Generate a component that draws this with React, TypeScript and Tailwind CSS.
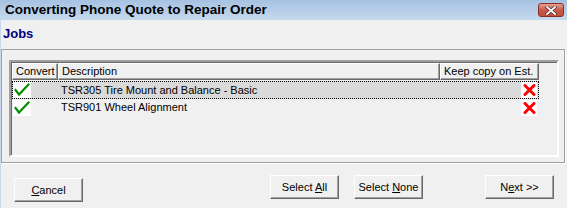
import React from "react";

const Check = () => (
  <svg width="16" height="14" viewBox="0 0 16 14">
    <path d="M1.5 7 L5 11.5 L14.5 1.5" fill="none" stroke="#009000" strokeWidth="2.2" strokeLinecap="square" />
  </svg>
);

const Cross = () => (
  <svg width="13" height="12" viewBox="0 0 13 12">
    <path d="M2 1.5 L11 10.5 M11 1.5 L2 10.5" stroke="#ff0000" strokeWidth="3" strokeLinecap="round" />
  </svg>
);

const Btn = ({ children, className = "" }: { children: React.ReactNode; className?: string }) => (
  <div
    className={
      "h-[24px] w-[69px] flex items-center justify-center bg-[#f0f0f0] border border-t-white border-l-white border-r-[#696969] border-b-[#696969] shadow-[inset_-1px_-1px_0_#a0a0a0] text-[11px] text-black " +
      className
    }
  >
    {children}
  </div>
);

export default function App() {
  return (
    <div className="w-[567px] h-[208px] bg-[#f0f0f0] overflow-hidden flex flex-col font-['Liberation_Sans',Arial,sans-serif]">
      <div className="h-[20px] shrink-0 bg-gradient-to-b from-[#a6c2e2] to-[#c6d9ee] flex items-center justify-between pl-[5px] pr-[3px]">
        <span className="text-[13.5px] font-bold text-black leading-none">
          Converting Phone Quote to Repair Order
        </span>
        <div className="w-[26px] h-[14px] rounded-[3px] border border-[#8a2e26] bg-gradient-to-b from-[#e3a093] via-[#c95a4a] to-[#c44d3c] flex items-center justify-center">
          <svg width="12" height="9" viewBox="0 0 12 9">
            <path d="M2 1 L10 8 M10 1 L2 8" stroke="#5a3030" strokeWidth="3.2" strokeLinecap="square" />
            <path d="M2 1 L10 8 M10 1 L2 8" stroke="#ffffff" strokeWidth="1.8" strokeLinecap="square" />
          </svg>
        </div>
      </div>
      <div className="flex-1 flex flex-col border-l border-[#c6d9ee]">
        <div className="h-[29px] shrink-0 flex items-start pl-[2px] pt-[7px]">
          <span className="text-[13px] font-bold text-[#000080] leading-none">Jobs</span>
        </div>
        <div className="mr-[2px] h-[114px] shrink-0 border border-[#a0a0a0] shadow-[1px_1px_0_#ffffff] pl-[7px] pr-[5px] pt-[10px] pb-[5px]">
          <div className="h-full border-2 border-t-[#a0a0a0] border-l-[#a0a0a0] border-r-white border-b-white shadow-[inset_1px_1px_0_#696969] pl-[1px] text-[11px] text-black">
            <div className="flex h-[17px] mt-[1px]">
              <div className="w-[46px] pl-[3px] flex items-center border border-t-white border-l-white border-r-[#696969] border-b-[#696969] shadow-[inset_-1px_-1px_0_#a0a0a0]">Convert</div>
              <div className="w-[382px] pl-[3px] flex items-center border border-t-white border-l-white border-r-[#696969] border-b-[#696969] shadow-[inset_-1px_-1px_0_#a0a0a0]">Description</div>
              <div className="w-[99px] pl-[3px] flex items-center border border-t-white border-l-white border-r-[#696969] border-b-[#696969] shadow-[inset_-1px_-1px_0_#a0a0a0]">Keep copy on Est.</div>
            </div>
            <div className="flex h-[18px] w-[527px] items-center border border-dotted border-black bg-[#dadada] mt-[1px]">
              <div className="w-[18px] h-[16px] bg-white flex items-center justify-center"><Check /></div>
              <div className="w-[27px]" />
              <div className="w-[380px] pl-[3px]">TSR305 Tire Mount and Balance - Basic</div>
              <div className="flex-1 flex justify-end pr-[1px]">
                <div className="w-[16px] h-[16px] bg-white flex items-center justify-center"><Cross /></div>
              </div>
            </div>
            <div className="flex h-[17px] w-[527px] items-center px-[1px]">
              <div className="w-[18px] h-[16px] bg-white flex items-center justify-center"><Check /></div>
              <div className="w-[27px]" />
              <div className="w-[380px] pl-[3px]">TSR901 Wheel Alignment</div>
              <div className="flex-1 flex justify-end pr-[1px]">
                <div className="w-[16px] h-[16px] bg-white flex items-center justify-center"><Cross /></div>
              </div>
            </div>
          </div>
        </div>
        <div className="flex items-start mt-[12px]">
          <Btn className="ml-[13px] mt-[3px]">
            <span><u>C</u>ancel</span>
          </Btn>
          <Btn className="ml-[187px]">
            <span>Select <u>A</u>ll</span>
          </Btn>
          <Btn className="ml-[15px] w-[68px]">
            <span>Select <u>N</u>one</span>
          </Btn>
          <Btn className="ml-[62px]">
            <span>N<u>e</u>xt &gt;&gt;</span>
          </Btn>
        </div>
      </div>
    </div>
  );
}
